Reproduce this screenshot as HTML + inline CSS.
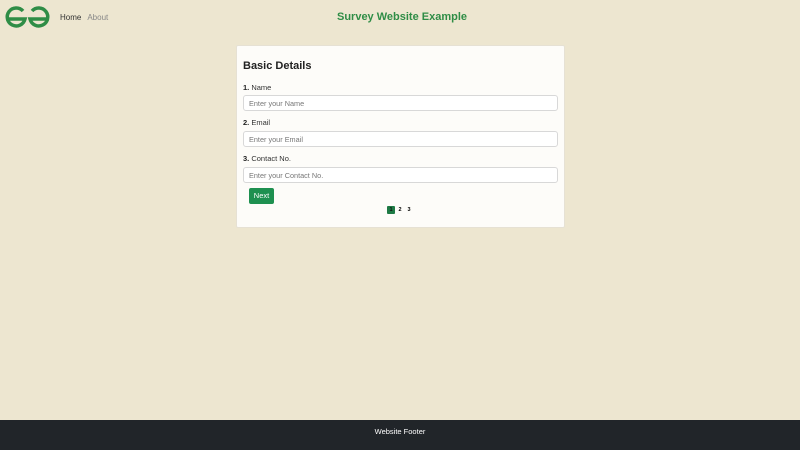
<!DOCTYPE html>
<html><head><style>
body{margin:0;width:800px;height:450px;background:#ede6d0;font-family:"Liberation Sans",sans-serif;position:relative;overflow:hidden}
.nav{position:absolute;left:60px;top:13px;font-size:8px}
.nav span{margin-right:6px}
h1{position:absolute;left:0;width:804px;text-align:center;top:11px;margin:0;font-size:11px;color:#2f8d46;font-weight:bold}
.card{position:absolute;left:236px;top:45px;width:329px;height:183px;background:#fdfcf9;border:1px solid #e6e1d4;box-sizing:border-box;border-radius:2px}
.card h2{position:absolute;left:6px;top:14px;margin:0;font-size:11px;font-weight:bold;color:#222}
.lbl{position:absolute;left:6px;font-size:7.5px;color:#333}
.lbl b{color:#222}
.in{position:absolute;left:6px;width:315px;height:16px;border:1px solid #d8d8d8;border-radius:3px;box-sizing:border-box;font-size:7.3px;color:#777;padding:3px 5px;background:#fff}
.btn{position:absolute;left:12px;top:142px;width:25px;height:16px;background:#1e9050;border-radius:2px;color:#fff;font-size:7.5px;text-align:center;line-height:16px}
.pg{position:absolute;top:160px;font-size:5.5px;font-weight:bold;width:8px;height:8px;line-height:8px;text-align:center}
.footer{position:absolute;left:0;top:420px;width:800px;height:30px;background:#212529;color:#fff;font-size:7.5px;text-align:center;line-height:24px}
</style></head><body>
<svg style="position:absolute;left:4px;top:6px" width="47" height="24" viewBox="0 0 47 24">
<g fill="none" stroke="#2f8d46" stroke-width="3.5">
<path d="M19 5 A9 9 0 1 0 21 13 L2 13"/>
<path d="M28 5 A9 9 0 1 1 26 13 L45 13"/>
</g></svg>
<div class="nav"><span style="color:#333">Home</span><span style="color:#888">About</span></div>
<h1>Survey Website Example</h1>
<div class="card">
<h2>Basic Details</h2>
<div class="lbl" style="top:37px"><b>1.</b> Name</div>
<div class="in" style="top:49px">Enter your Name</div>
<div class="lbl" style="top:72px"><b>2.</b> Email</div>
<div class="in" style="top:85px">Enter your Email</div>
<div class="lbl" style="top:108px"><b>3.</b> Contact No.</div>
<div class="in" style="top:121px">Enter your Contact No.</div>
<div class="btn">Next</div>
<div class="pg" style="left:150px;background:#1e7a45;border-radius:1px;color:#111">1</div>
<div class="pg" style="left:159px">2</div>
<div class="pg" style="left:168px">3</div>
</div>
<div class="footer">Website Footer</div>
</body></html>
